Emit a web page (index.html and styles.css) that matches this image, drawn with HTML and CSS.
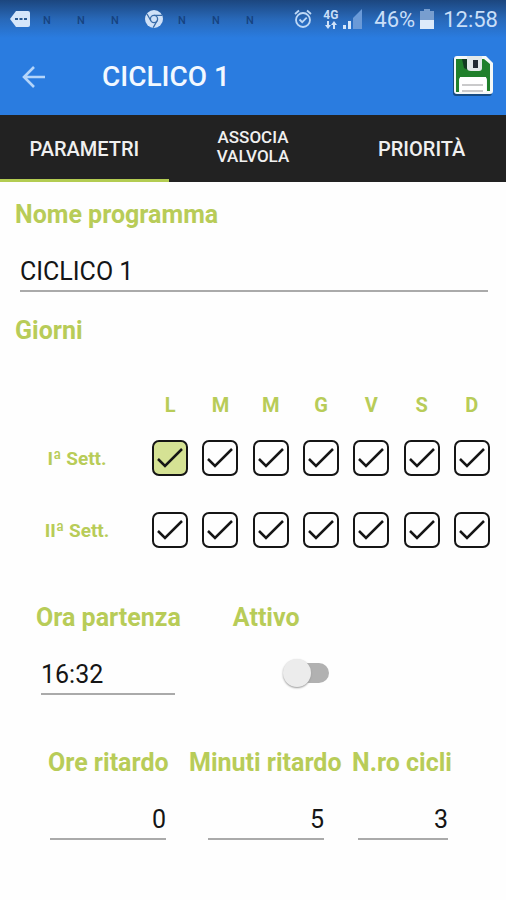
FILE: index.html
```html
<!DOCTYPE html>
<html lang="it">
<head>
<meta charset="utf-8">
<meta name="viewport" content="width=device-width, initial-scale=1">
<title>CICLICO 1</title>
<link rel="stylesheet" href="styles.css">
</head>
<body>
<div class="status">
  <div class="status-left">
    <svg class="more" width="20" height="16" viewBox="0 0 20 16"><path d="M6 0h12a2 2 0 0 1 2 2v12a2 2 0 0 1-2 2H6L0 8z" fill="#d5e6fa"/><path d="M5 7h3v2H5zM9.500 7h3v2h-3zM14 7h3v2h-3z" fill="#285992"/></svg>
    <span class="n">N</span><span class="n">N</span><span class="n">N</span>
    <svg class="chrome" width="18" height="18" viewBox="0 0 18 18"><circle cx="9" cy="9" r="9" fill="#cfe1f8"/><g fill="none" stroke="#386ba8" stroke-width="1.300"><circle cx="9" cy="9" r="3.600"/><path d="M9 5.400h8M5.900 10.800 2 4M12.100 10.800 8.200 17.600"/></g></svg>
    <span class="n">N</span><span class="n">N</span><span class="n">N</span>
  </div>
  <div class="status-right">
    <svg width="18" height="20" viewBox="0 0 18 20" fill="none" stroke="#bdd8f6" stroke-width="1.800"><circle cx="9" cy="11" r="7"/><path d="M1 5l4-3.500M17 5l-4-3.500M5.500 10.500l2.700 2.700 4.500-4.500"/></svg>
    <span class="net"><span>4G</span><svg width="12" height="8" viewBox="0 0 12 8" fill="#cfe2f9"><path d="M2 0h2v4h2L3 8 0 4h2zM9 0l3 4h-2v4H8V4H6z"/></svg></span>
    <svg width="20" height="20" viewBox="0 0 20 20"><path d="M0 16h3v4H0zM5 12h3v8H5z" fill="#d5e6fa"/><path d="M10 9 19 0v20h-9z" fill="#6a9ad8"/></svg>
    <span class="pct">46%</span>
    <svg class="batt" width="14" height="20" viewBox="0 0 14 20"><path d="M0 2h4V0h6v2h4v10H0z" fill="#789ecf"/><path d="M0 11h14v9H0z" fill="#dceafa"/></svg>
    <span class="clock">12:58</span>
  </div>
</div>
<header class="bar">
  <button class="icon-btn" type="button" aria-label="Indietro"><svg width="24" height="22" viewBox="0 0 24 22" fill="none" stroke="#b4d5fa" stroke-width="2.600"><path d="M23 11H2M12 1 2 11l10 10"/></svg></button>
  <h1>CICLICO 1</h1>
  <button class="icon-btn save" type="button" aria-label="Salva"><svg width="42" height="42" viewBox="0 0 42 42"><path d="M4 2h30l6 6v30q0 3-3 3H4q-3 0-3-3V5q0-3 3-3z" fill="#164b82"/><path d="M5 1h29l7 7v28q0 3-3 3H5q-3 0-3-3V4q0-3 3-3z" fill="#f4f8f8"/><path d="M4 4h28l6 5v27h-3V25q0-3-3-3H10q-3 0-3 3v12H4z" fill="#20802b"/><path d="M10 4h6v11l-4-2z" fill="#123921"/><path d="M15 1h15v12q0 3-3 3h-8q-4 0-4-3z" fill="#e3e9e9"/><path d="M21 5h5v8h-5z" fill="#222b32"/><path d="M8 22h26v15H8z" fill="#fff"/><path d="M10 30h21M10 36h21" stroke="#b9b9bb" stroke-width="1.500"/></svg></button>
</header>
<nav class="tabs">
  <a class="tab active" href="#parametri">PARAMETRI</a>
  <a class="tab small" href="#valvola">ASSOCIA VALVOLA</a>
  <a class="tab" href="#priorita">PRIORITÀ</a>
</nav>
<main>
<form>
  <label class="label" for="nome">Nome programma</label>
  <input class="field name" id="nome" type="text" value="CICLICO 1">
  <h2 class="label">Giorni</h2>
  <table class="days">
    <thead><tr><td></td><th scope="col">L</th><th scope="col">M</th><th scope="col">M</th><th scope="col">G</th><th scope="col">V</th><th scope="col">S</th><th scope="col">D</th></tr></thead>
    <tbody>
      <tr><th scope="row">Iª Sett.</th>
        <td><label class="day on"><input type="checkbox" checked aria-label="Lunedì, prima settimana"><svg viewBox="0 0 32 32"><path d="M4 17l7 7L28 7"/></svg></label></td>
        <td><label class="day"><input type="checkbox" checked aria-label="Martedì, prima settimana"><svg viewBox="0 0 32 32"><path d="M4 17l7 7L28 7"/></svg></label></td>
        <td><label class="day"><input type="checkbox" checked aria-label="Mercoledì, prima settimana"><svg viewBox="0 0 32 32"><path d="M4 17l7 7L28 7"/></svg></label></td>
        <td><label class="day"><input type="checkbox" checked aria-label="Giovedì, prima settimana"><svg viewBox="0 0 32 32"><path d="M4 17l7 7L28 7"/></svg></label></td>
        <td><label class="day"><input type="checkbox" checked aria-label="Venerdì, prima settimana"><svg viewBox="0 0 32 32"><path d="M4 17l7 7L28 7"/></svg></label></td>
        <td><label class="day"><input type="checkbox" checked aria-label="Sabato, prima settimana"><svg viewBox="0 0 32 32"><path d="M4 17l7 7L28 7"/></svg></label></td>
        <td><label class="day"><input type="checkbox" checked aria-label="Domenica, prima settimana"><svg viewBox="0 0 32 32"><path d="M4 17l7 7L28 7"/></svg></label></td>
      </tr>
      <tr><th scope="row">IIª Sett.</th>
        <td><label class="day"><input type="checkbox" checked aria-label="Lunedì, seconda settimana"><svg viewBox="0 0 32 32"><path d="M4 17l7 7L28 7"/></svg></label></td>
        <td><label class="day"><input type="checkbox" checked aria-label="Martedì, seconda settimana"><svg viewBox="0 0 32 32"><path d="M4 17l7 7L28 7"/></svg></label></td>
        <td><label class="day"><input type="checkbox" checked aria-label="Mercoledì, seconda settimana"><svg viewBox="0 0 32 32"><path d="M4 17l7 7L28 7"/></svg></label></td>
        <td><label class="day"><input type="checkbox" checked aria-label="Giovedì, seconda settimana"><svg viewBox="0 0 32 32"><path d="M4 17l7 7L28 7"/></svg></label></td>
        <td><label class="day"><input type="checkbox" checked aria-label="Venerdì, seconda settimana"><svg viewBox="0 0 32 32"><path d="M4 17l7 7L28 7"/></svg></label></td>
        <td><label class="day"><input type="checkbox" checked aria-label="Sabato, seconda settimana"><svg viewBox="0 0 32 32"><path d="M4 17l7 7L28 7"/></svg></label></td>
        <td><label class="day"><input type="checkbox" checked aria-label="Domenica, seconda settimana"><svg viewBox="0 0 32 32"><path d="M4 17l7 7L28 7"/></svg></label></td>
      </tr>
    </tbody>
  </table>
  <div class="start">
    <div class="cell"><label class="label" for="ora">Ora partenza</label><input class="field time" id="ora" type="text" value="16:32"></div>
    <div class="cell"><label class="label" for="attivo">Attivo</label><div class="switch-row"><input class="switch" id="attivo" type="checkbox" role="switch"></div></div>
  </div>
  <div class="delays">
    <div class="cell"><label class="label" for="ore">Ore ritardo</label><input class="field num" id="ore" type="text" inputmode="numeric" value="0"></div>
    <div class="cell"><label class="label" for="minuti">Minuti ritardo</label><input class="field num minutes" id="minuti" type="text" inputmode="numeric" value="5"></div>
    <div class="cell"><label class="label" for="cicli">N.ro cicli</label><input class="field num cycles" id="cicli" type="text" inputmode="numeric" value="3"></div>
  </div>
</form>
</main>
</body>
</html>
```
FILE: styles.css
```css
* { box-sizing: border-box; }
body {
  margin: 0;
  background: #fefefe;
  color: #151515;
  font-family: Roboto, "Liberation Sans", sans-serif;
}
svg { display: block; flex: none; }

.status {
  display: flex;
  justify-content: space-between;
  align-items: center;
  height: 38px;
  padding: 0 8px 0 10px;
  background: linear-gradient(#1c467e, #2868b8 50%, #2a7ce0);
  color: #c9dff8;
  font-size: 22px;
}
.status-left, .status-right { display: flex; align-items: center; }
.status-right { gap: 5px; }
.n { width: 34px; text-align: center; font-size: 11px; font-weight: 500; line-height: 12px; color: #16427f; padding-top: 4px; }
.chrome { margin: 0 2px 0 13px; }
.net { display: flex; flex-direction: column; align-items: center; font-size: 12px; font-weight: 700; line-height: 11px; margin-left: 6px; }
.pct { margin-left: 6px; }
.clock { margin-left: 4px; }

.bar {
  display: flex;
  align-items: center;
  height: 77px;
  padding: 0 12px 0 22px;
  background: #2a7ce0;
}
.bar h1 { flex: 1; margin: 0 0 0 56px; color: #f2f8ff; font-size: 28px; font-weight: 500; }
.icon-btn { padding: 0; border: 0; background: none; }
.save { padding-bottom: 2px; }

.tabs { display: grid; grid-template-columns: repeat(3, minmax(0, 1fr)); height: 67px; background: #222; }
.tab {
  display: flex;
  align-items: center;
  justify-content: center;
  padding: 4px 24px 0;
  border-bottom: 3px solid #222;
  color: #f0f0f0;
  font-size: 20px;
  font-weight: 500;
  text-align: center;
  text-decoration: none;
}
.tab.small { padding: 0 40px; font-size: 17px; line-height: 19px; }
.tab.active { border-bottom-color: #b3cc52; }

main { padding: 18px 15px; }
.label { display: block; margin: 0; color: #b8cc58; font-size: 25px; font-weight: 700; line-height: 30px; white-space: nowrap; }
.field {
  display: block;
  padding: 0;
  border: 0;
  border-bottom: 2px solid #aaa;
  border-radius: 0;
  background: none;
  color: #151515;
  font: 25px/36px Roboto, "Liberation Sans", sans-serif;
  height: 40px;
  outline: 0;
}
.name { width: calc(100% - 8px); margin: 22px 0 24px 5px; }

.days { width: calc(100% + 12px); margin: 42px -6px 37px; table-layout: fixed; border-collapse: collapse; color: #b8cc58; }
.days th, .days td { padding: 0; font-size: 20px; font-weight: 700; text-align: center; }
.days thead td { width: 136px; }
.days thead tr { height: 34px; }
.days tbody tr { height: 72px; }
.days tbody th { font-size: 19px; }
.day { display: block; position: relative; width: 36px; height: 36px; margin: 0 auto; border: 2px solid #151515; border-radius: 7px; }
.day.on { background: #d5e294; }
.day input { position: absolute; inset: 0; width: 100%; height: 100%; margin: 0; opacity: 0; }
.day svg { width: 32px; height: 32px; }
.day path { fill: none; stroke: #151515; stroke-width: 2.500; }

.start { display: flex; gap: 52px; padding-left: 21px; }
.time { width: 134px; margin: 22px 0 0 5px; }
.switch-row { display: flex; justify-content: flex-end; margin-top: 25px; }
.start .cell:last-child { width: 96px; }
.switch { appearance: none; position: relative; width: 46px; height: 30px; margin: 0; }
.switch::before { content: ""; position: absolute; inset: 5px 0 5px 8px; border-radius: 10px; background: #b1b1b1; }
.switch::after { content: ""; position: absolute; left: 0; top: 1px; width: 28px; height: 28px; border-radius: 50%; background: #ececec; box-shadow: 0 1px 2px #999; }

.delays { display: grid; grid-template-columns: 141px 163px 1fr; margin-top: 53px; padding-left: 33px; }
.num { width: 116px; margin: 22px 0 0 2px; text-align: right; }
.minutes { margin-left: 19px; }
.cycles { width: 90px; margin-left: 6px; }
```
